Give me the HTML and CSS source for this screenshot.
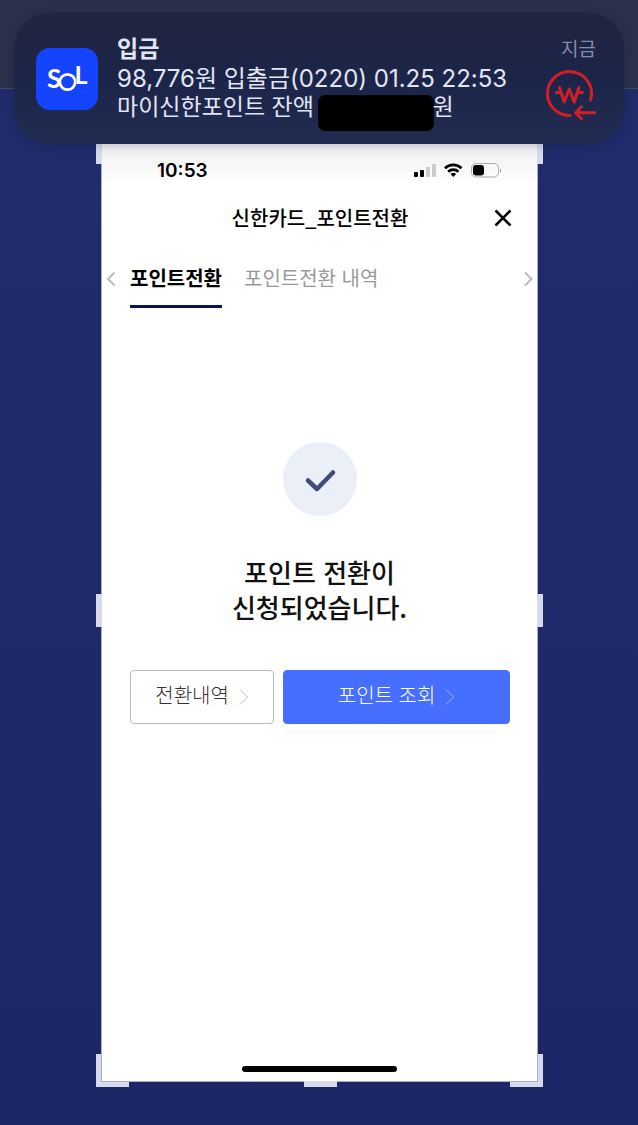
FILE: index.html
```html
<!DOCTYPE html>
<html lang="ko">
<head>
  <meta charset="UTF-8">
  <meta name="viewport" content="width=device-width, initial-scale=1">
  <title>신한카드_포인트전환</title>
  <link rel="stylesheet" href="styles.css">
</head>
<body>
  <div class="notification">
    <svg class="app-icon" viewBox="0 0 62 62" role="img" aria-label="SOL">
      <rect width="62" height="62" rx="14" fill="#1544ff"/>
      <g fill="#fff" font-family="Lato, sans-serif" font-weight="700">
        <text x="11" y="40" font-size="26">S</text>
        <circle cx="31.500" cy="34" r="7.700" fill="none" stroke="#fff" stroke-width="2.800"/>
        <text x="38.500" y="35.500" font-size="25">L</text>
      </g>
    </svg>
    <div class="message">
      <strong>입금</strong>
      <p class="amount">98,776원 입출금(0220) 01.25 22:53</p>
      <p>마이신한포인트 잔액 <span class="redacted"></span>원</p>
    </div>
    <div class="meta">
      <span class="time">지금</span>
      <svg class="won" viewBox="0 0 50 50" fill="none" stroke="#d21f26" stroke-width="3" stroke-linecap="round" stroke-linejoin="round">
        <path d="M24 45.500A22 22 0 1 1 44.500 30"/>
        <path d="M13.500 17.500l4.700 14.500 5-13 5 13 4.700-14.500M10.500 22.500h4.500m17 0h4.500"/>
        <path d="M48.500 42.700H29.500m6-6-6 6 6 6"/>
      </svg>
    </div>
  </div>

  <main class="screen">
    <span class="handle top-left"></span>
    <span class="handle top-right"></span>
    <span class="handle left"></span>
    <span class="handle right"></span>
    <span class="handle bottom-left"></span>
    <span class="handle bottom"></span>
    <span class="handle bottom-right"></span>

    <div class="status-bar">
      <span>10:53</span>
      <svg width="88" height="18" viewBox="0 0 88 18">
        <rect x="0" y="11" width="4" height="5" rx="1"/>
        <rect x="6" y="9" width="4" height="7" rx="1"/>
        <g fill="#ccc">
          <rect x="12" y="6" width="4" height="10" rx="1"/>
          <rect x="18" y="3" width="4" height="13" rx="1"/>
        </g>
        <g fill="none" stroke="#000" stroke-width="2.600">
          <path d="M31 7.200a12 12 0 0 1 16.500 0"/>
          <path d="M34.200 10.700a7.300 7.300 0 0 1 10.200 0"/>
        </g>
        <path d="M36.500 13a4 4 0 0 1 5.600 0L39.300 16z"/>
        <rect x="57.500" y="2.500" width="27" height="13.500" rx="4.500" fill="none" stroke="#aaa"/>
        <rect x="59" y="4" width="11" height="10.500" rx="3"/>
        <path d="M86 7.500v4q1-.5 1-2t-1-2z" fill="#888"/>
      </svg>
    </div>

    <header class="title-bar">
      <h1>신한카드_포인트전환</h1>
      <button class="close" aria-label="닫기">
        <svg width="18" height="18" viewBox="0 0 18 18"><path d="M1.500 1.500l15 15m0-15l-15 15"/></svg>
      </button>
    </header>

    <nav class="tabs">
      <button class="arrow" aria-label="이전">
        <svg width="10" height="16" viewBox="0 0 10 16"><path d="M8.500 1.500L2 8 8.500 14.500"/></svg>
      </button>
      <a class="tab active" href="#">포인트전환</a>
      <a class="tab" href="#">포인트전환 내역</a>
      <button class="arrow next" aria-label="다음">
        <svg width="10" height="16" viewBox="0 0 10 16"><path d="M2 1.500L8.500 8 2 14.500"/></svg>
      </button>
    </nav>

    <section class="result">
      <svg class="check" viewBox="0 0 74 74">
        <circle cx="37" cy="37" r="37" fill="#ebf0f8"/>
        <path d="M25 38.500l9 8.500 16-16.500" fill="none" stroke="#3f4d7c" stroke-width="4.500" stroke-linecap="round" stroke-linejoin="round"/>
      </svg>
      <h2>포인트 전환이<br>신청되었습니다.</h2>
    </section>

    <div class="actions">
      <button class="btn">
        <span>전환내역</span>
        <svg width="10" height="18" viewBox="0 0 10 18"><path d="M1 1.500L8.500 9 1 16.500"/></svg>
      </button>
      <button class="btn primary">
        <span>포인트 조회</span>
        <svg width="10" height="18" viewBox="0 0 10 18"><path d="M1 1.500L8.500 9 1 16.500"/></svg>
      </button>
    </div>

    <div class="home-bar"></div>
  </main>
</body>
</html>
```
FILE: styles.css
```css
* {
  box-sizing: border-box;
}

body {
  margin: 0;
  padding: 13px 14px 44px;
  min-height: 100vh;
  display: flex;
  flex-direction: column;
  font-family: Inter, "Noto Sans CJK KR", sans-serif;
  background: linear-gradient(#2b304b 88px, #454a58 88px, #454a58 89px, #202c6c 89px, #1b2766);
}

h1, h2, p {
  margin: 0;
}

button {
  padding: 0;
  border: 0;
  background: none;
  font-family: inherit;
}

a {
  color: inherit;
  text-decoration: none;
}

/* push notification */
.notification {
  position: relative;
  z-index: 1;
  display: flex;
  align-items: center;
  gap: 19px;
  height: 131px;
  padding: 0 28px 0 22px;
  border-radius: 36px;
  background: linear-gradient(#20243e, #1c2549 50%, #202c50);
  box-shadow: 0 0 12px rgba(20, 24, 50, 0.3);
}

.app-icon {
  width: 62px;
  height: 62px;
  flex: none;
}

.message {
  flex: 1;
  font-size: 23px;
  line-height: 29px;
  color: #e2e5f2;
  white-space: nowrap;
}

.message strong {
  display: block;
  font-weight: 600;
}

.message .amount {
  font-size: 24px;
}

.redacted {
  display: inline-block;
  width: 116px;
  height: 36px;
  margin: -6px -2px -10px;
  border-radius: 7px;
  background: #000;
  vertical-align: -6px;
}

.meta {
  display: flex;
  flex-direction: column;
  align-items: flex-end;
  gap: 8px;
}

.time {
  font-size: 19px;
  line-height: 24px;
  color: #858bad;
}

.won {
  width: 50px;
  height: 50px;
  overflow: visible;
}

/* cropped phone screen */
.screen {
  position: relative;
  flex: 1;
  display: flex;
  flex-direction: column;
  margin: 0 87px 0 88px;
  background: linear-gradient(#efefef, #fff 40px);
  box-shadow: 0 0 0 1px #a9aeca;
}

.handle {
  position: absolute;
  width: 6px;
  height: 33px;
  background: #d6daea;
}

.top-left, .left, .bottom-left {
  left: -6px;
}

.top-right, .right, .bottom-right {
  right: -6px;
}

.top-left, .top-right {
  top: 0;
  height: 20px;
}

.left, .right {
  top: 48%;
}

.bottom-left, .bottom-right {
  width: 33px;
  bottom: -6px;
  z-index: -1;
}

.bottom {
  width: 33px;
  height: 6px;
  left: calc(50% - 16px);
  bottom: -6px;
}

.status-bar {
  display: flex;
  justify-content: space-between;
  align-items: center;
  height: 52px;
  padding: 0 35px 0 55px;
  font-size: 19px;
  font-weight: 600;
}

.title-bar {
  display: grid;
  grid-template-columns: 1fr auto 1fr;
  align-items: center;
  height: 43px;
  padding: 0 25px 0 26px;
}

.title-bar h1 {
  grid-column: 2;
  font-family: "Noto Sans CJK KR", sans-serif;
  font-size: 20px;
  font-weight: 500;
}

.close {
  display: flex;
  justify-self: end;
}

.close svg {
  fill: none;
  stroke: #000;
  stroke-width: 2.5;
}

.tabs {
  display: flex;
  align-items: flex-start;
  gap: 22px;
  padding: 19px 4px 0;
  font-family: "Noto Sans CJK KR", sans-serif;
  font-size: 20px;
  line-height: 40px;
  color: #999;
}

.tab {
  height: 50px;
}

.tab.active {
  margin-left: -8px;
  border-bottom: 3px solid #0b1450;
  color: #000;
  font-weight: 700;
}

.arrow {
  display: flex;
  align-items: center;
  height: 42px;
}

.arrow svg {
  fill: none;
  stroke: #bbb;
  stroke-width: 2;
}

.next {
  margin-left: auto;
}

.result {
  display: flex;
  flex-direction: column;
  align-items: center;
  gap: 38px;
  padding-top: 134px;
}

.check {
  width: 74px;
  height: 74px;
}

.result h2 {
  font-family: "Noto Sans CJK KR", sans-serif;
  font-size: 26px;
  font-weight: 500;
  line-height: 35px;
  text-align: center;
  color: #111;
}

.actions {
  display: grid;
  grid-template-columns: 145fr 228fr;
  gap: 9px;
  padding: 46px 27px 0 28px;
}

.btn {
  display: flex;
  justify-content: center;
  align-items: center;
  gap: 10px;
  height: 54px;
  border: 1px solid #bbb;
  border-radius: 4px;
  font-family: "Noto Sans CJK KR", sans-serif;
  font-size: 20px;
  font-weight: 300;
  color: #333;
}

.btn span {
  padding-bottom: 5px;
}

.btn svg {
  fill: none;
  stroke: #bbb;
}

.btn.primary {
  border-color: #466eff;
  background: #466eff;
  color: #fff;
}

.btn.primary svg {
  stroke: #a3b7ff;
}

.home-bar {
  width: 155px;
  height: 6px;
  margin: auto auto 9px;
  border-radius: 3px;
  background: #000;
}
```
